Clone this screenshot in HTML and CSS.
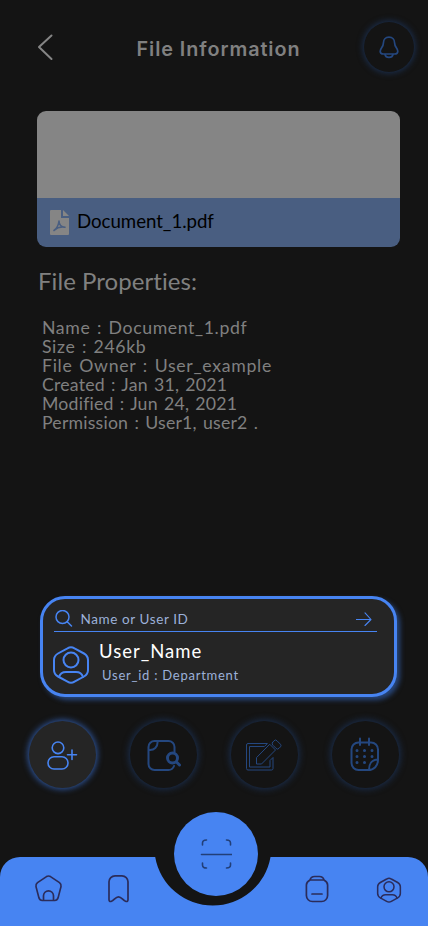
FILE: index.html
```html
<!DOCTYPE html>
<html lang="en">
<head>
<meta charset="utf-8">
<meta name="viewport" content="width=device-width, initial-scale=1">
<title>File Information</title>
<link rel="stylesheet" href="styles.css">
</head>
<body>
<div class="screen">
  <header class="header">
    <svg class="back" viewBox="0 0 16 28"><path d="M14.500 2.500 2 14 14.500 26"/></svg>
    <h1 class="title">File Information</h1>
    <div class="bell">
      <svg width="20" height="23" viewBox="0 0 20 23"><path d="M10 1.200c-3.500 0-5.600 2.600-5.600 5.800 0 4-3.200 5.200-3.200 8.200 0 2 1.600 2.800 3.300 2.800h11c1.700 0 3.300-.8 3.300-2.800 0-3-3.200-4.200-3.200-8.200 0-3.200-2.100-5.800-5.600-5.800z"/><path d="M6 18.500c.8 3.800 7.200 3.800 8 0"/></svg>
    </div>
  </header>

  <section class="file-card">
    <div class="preview"></div>
    <div class="file-bar">
      <svg width="19" height="25" viewBox="0 0 19 25"><path class="sheet" d="M1 0h10v8h8v16a1 1 0 0 1-1 1H1a1 1 0 0 1-1-1V1a1 1 0 0 1 1-1z"/><path class="sheet" d="M13 0l6 6h-6z"/><path class="mark" d="M4 20.500c2.500-1.700 4.500-5.500 5-9.500 0 3 2 6 6 6.300-4-.8-8 .4-11 3.200"/></svg>
      <span class="file-name">Document_1.pdf</span>
    </div>
  </section>

  <h2 class="subtitle">File Properties:</h2>
  <div class="props">
    <div class="wide">Name : Document_1.pdf</div>
    <div class="wide">Size : 246kb</div>
    <div class="wider">File Owner : User_example</div>
    <div class="narrow">Created : Jan 31, 2021</div>
    <div class="narrow">Modified : Jun 24, 2021</div>
    <div class="narrow">Permission : User1, user2 .</div>
  </div>

  <section class="picker">
    <div class="search">
      <svg width="18" height="18" viewBox="0 0 18 18"><circle cx="7.500" cy="7" r="6.500"/><path d="M12.200 11.700l4.300 4.300"/></svg>
      <span class="placeholder">Name or User ID</span>
      <svg class="arrow" width="16" height="14" viewBox="0 0 16 14"><path d="M0 7.500h15M9 .9l6 6.600-6 6"/></svg>
    </div>
    <div class="user">
      <svg width="36" height="38" viewBox="0 0 36 38"><use href="#avatar"/></svg>
      <div class="user-text">
        <div class="user-name">User_Name</div>
        <div class="user-id">User_id : Department</div>
      </div>
    </div>
  </section>

  <div class="actions">
    <div class="action active"><svg viewBox="0 0 68 68"><circle cx="30" cy="26.800" r="5.800"/><rect x="20" y="35.800" width="20" height="12.200" rx="6"/><path d="M39.500 33.700h9M44 29v9.500"/></svg></div>
    <div class="action"><svg viewBox="0 0 68 68" class="bold"><path d="M45.500 31v-5a6 6 0 0 0-6-6h-14a6 6 0 0 0-6 6v17a6 6 0 0 0 6 6h14q4 0 5.500-4M20 29c5 .5 9-3 8.500-8.500"/><circle class="heavy" cx="43.500" cy="37" r="5"/><path class="heavy" d="M47.500 41l3 3"/></svg></div>
    <div class="action"><svg viewBox="0 0 68 68" class="thin"><path d="M37 22.500H18a1.500 1.500 0 0 0-1.500 1.500v23.500A1.500 1.500 0 0 0 18 49h23.500a1.500 1.500 0 0 0 1.500-1.500V36.500l-3 3V46H19.500V25.500H34zM40 23.500l5.500 5.500-14 14H26.500v-6zM42.500 21.500l1.500-1.700a2 2 0 0 1 3 0l3.500 3.500a2 2 0 0 1 0 2.500l-1.500 1.500a2 2 0 0 1-3 0l-3-3a2 2 0 0 1-.5-2.800z"/></svg></div>
    <div class="action"><svg viewBox="0 0 68 68" class="bold"><path d="M47 38.500v-10a7 7 0 0 0-7-7H27.500a7 7 0 0 0-7 7V42a7 7 0 0 0 7 7H37c6 0 10-4 10-10.500-5.500 0-9 4-9 10M29 17.500v6.500M38 17.500v6.500"/><path class="dots" d="M26 29.500h.01M33.500 29.500h.01M41 29.500h.01M26 35.500h.01M33.500 35.500h.01M41 35.500h.01M26 41.500h.01M33.500 41.500h.01"/></svg></div>
  </div>

  <nav class="nav">
    <svg class="nav-shape" viewBox="0 0 428 69"><path d="M0 69V20A20 20 0 0 1 20 0H155.200A58.500 58.500 0 0 0 270.500 0H408A20 20 0 0 1 428 20V69z"/></svg>
    <svg class="tab" viewBox="0 0 30 30"><path d="M13.500 2.600q2-1.200 4 0l9 6q2 1.500 1.500 4l-3 11.500q-.8 2.400-3.200 2.400H9.200q-2.400 0-3.200-2.400l-3-11.500q-.5-2.500 1.500-4zM10.500 26.500v-4.700a5 5 0 0 1 10 0v4.700"/></svg>
    <svg class="tab" viewBox="0 0 30 30"><path d="M6 7.800a6 6 0 0 1 6-6h7a6 6 0 0 1 6 6v17.800q0 2.500-2.500 1.700c-2.500-.8-4-4.500-7-4.500s-4.500 3.700-7 4.500q-2.500.8-2.500-1.700z"/></svg>
    <svg class="tab pack" viewBox="0 0 30 30"><path d="M8 6h14q3.600 2 3.600 5v10.500a6 6 0 0 1-6 6h-9.200a6 6 0 0 1-6-6V11q0-3 3.600-5 1-3.500 4.500-3.500h5q3.500 0 4.500 3.500M10 20h10"/></svg>
    <svg class="tab person" viewBox="0 0 30 30"><g transform="translate(3 3.500) scale(.667)"><g id="avatar"><path d="M14.500 2.300Q18 .2 21.500 2.300L31 7.500q4 2.300 4 6.500v10q0 4.200-4 6.500l-9.500 5.200q-3.500 2.100-7 0L5 30.500Q1 28.200 1 24V14q0-4.200 4-6.500z"/><circle cx="18" cy="14" r="7.500"/><path d="M6 31q1.500-5 7-5h10q5.500 0 7 5"/></g></g></svg>
    <div class="scan"><svg viewBox="0 0 32 32"><path d="M2.500 7V5q0-3 4-3M26.500 2q4 0 4 3v2M30.500 25v2q0 3-4 3M6.500 30q-4 0-4-3v-2M1.500 16.500h30"/></svg></div>
  </nav>
</div>
</body>
</html>
```
FILE: styles.css
```css
* { box-sizing: border-box; }
body { margin: 0; background: #141414; }
h1, h2 { margin: 0; font-weight: 400; }
svg { display: block; flex: none; fill: none; stroke: currentColor; stroke-linecap: round; stroke-linejoin: round; }
.screen { width: 428px; height: 926px; display: flex; flex-direction: column; overflow: hidden; background: #141414; font-family: Lato, "Liberation Sans", sans-serif; white-space: nowrap; }

.header { height: 111px; padding: 22px 14px 0 37px; display: flex; align-items: flex-start; justify-content: space-between; }
.back { width: 16px; height: 28px; margin-top: 11px; color: #858585; stroke-width: 2; }
.title { margin: 15px 0 0 20px; font: 600 19.800px/24px Inter, sans-serif; letter-spacing: .93px; color: #808080; }
.bell { width: 50px; height: 50px; border-radius: 50%; display: grid; place-items: center; color: #24477f; stroke-width: 1.700; box-shadow: 0 0 6px 1px #1b3052; }

.file-card { width: 363px; height: 136px; margin-left: 37px; border-radius: 9px; overflow: hidden; flex: none; }
.preview { height: 87px; background: #858585; }
.file-bar { height: 49px; padding: 0 0 0 13px; display: flex; align-items: center; gap: 8px; background: #495e81; }
.sheet { fill: #858585; stroke: none; }
.mark { stroke: #495e81; stroke-width: 1.600; }
.file-name { font-size: 18.700px; line-height: 24px; color: #000; letter-spacing: -.05px; margin-top: -4px; }

.subtitle { margin: 20px 0 0 38px; font-size: 24px; line-height: 28px; color: #808080; letter-spacing: .06px; }
.props { margin: 23px 0 0 42px; font-size: 17.700px; line-height: 19px; word-spacing: 1.500px; color: #808080; }
.wide { letter-spacing: .6px; }
.wider { letter-spacing: .7px; }
.narrow { letter-spacing: .2px; }

.picker { width: 357px; height: 101px; margin: 164px 0 0 40px; padding: 7px 17px 0 11px; flex: none; border: 3px solid #4784f2; border-radius: 25px; background: #252525; box-shadow: 3px 3px 5px #28477c; color: #4784f2; }
.search { height: 26px; padding: 0 5px 0 1px; display: flex; align-items: center; border-bottom: 1px solid #4784f2; stroke-width: 1.500; }
.placeholder { margin-left: 7.500px; font-size: 13.500px; line-height: 18px; letter-spacing: .6px; color: #9cb1d9; }
.arrow { margin-left: auto; stroke-width: 1.100; }
.user { display: flex; margin: 14px 0 0 -1px; gap: 10px; stroke-width: 2; }
.user-text { margin-top: -7px; }
.user-name { font-size: 18.500px; line-height: 24px; letter-spacing: 1px; color: #fff; }
.user-id { margin: 4px 0 0 3px; font-size: 13px; line-height: 17px; letter-spacing: .75px; color: #9cb1d9; }

.actions { display: flex; justify-content: space-between; padding: 0 29px 0 29px; margin-top: 24px; }
.action { width: 67px; height: 67px; border-radius: 50%; color: #24477f; box-shadow: 0 0 7px 1px #1b3052; }
.action svg { width: 68px; height: 68px; margin-left: -1px; }
.action.active { background: #252525; color: #4784f2; box-shadow: 0 0 6px 1px #305ba8; stroke-width: 1.600; }
.bold { stroke-width: 2; }
.heavy { stroke-width: 3; }
.thin { stroke-width: 1; }
.dots { stroke-width: 3; }

.nav { position: relative; height: 69px; margin-top: auto; padding: 17px 23px 0 33px; display: grid; grid-template-columns: 70px 1fr 72px 30px; color: #2b2c5b; }
.nav-shape { position: absolute; inset: 0; width: 428px; height: 69px; fill: #4784f2; stroke: none; }
.tab { position: relative; width: 30px; height: 30px; stroke-width: 1.700; }
.pack, .person { margin-left: -1px; }
.person { stroke-width: 2.300; }
.scan { position: absolute; left: 174px; top: -45px; width: 84px; height: 84px; border-radius: 50%; display: grid; place-items: center; background: #4784f2; color: #223f78; stroke-width: 1.600; }
.scan svg { width: 32px; height: 32px; }
```
